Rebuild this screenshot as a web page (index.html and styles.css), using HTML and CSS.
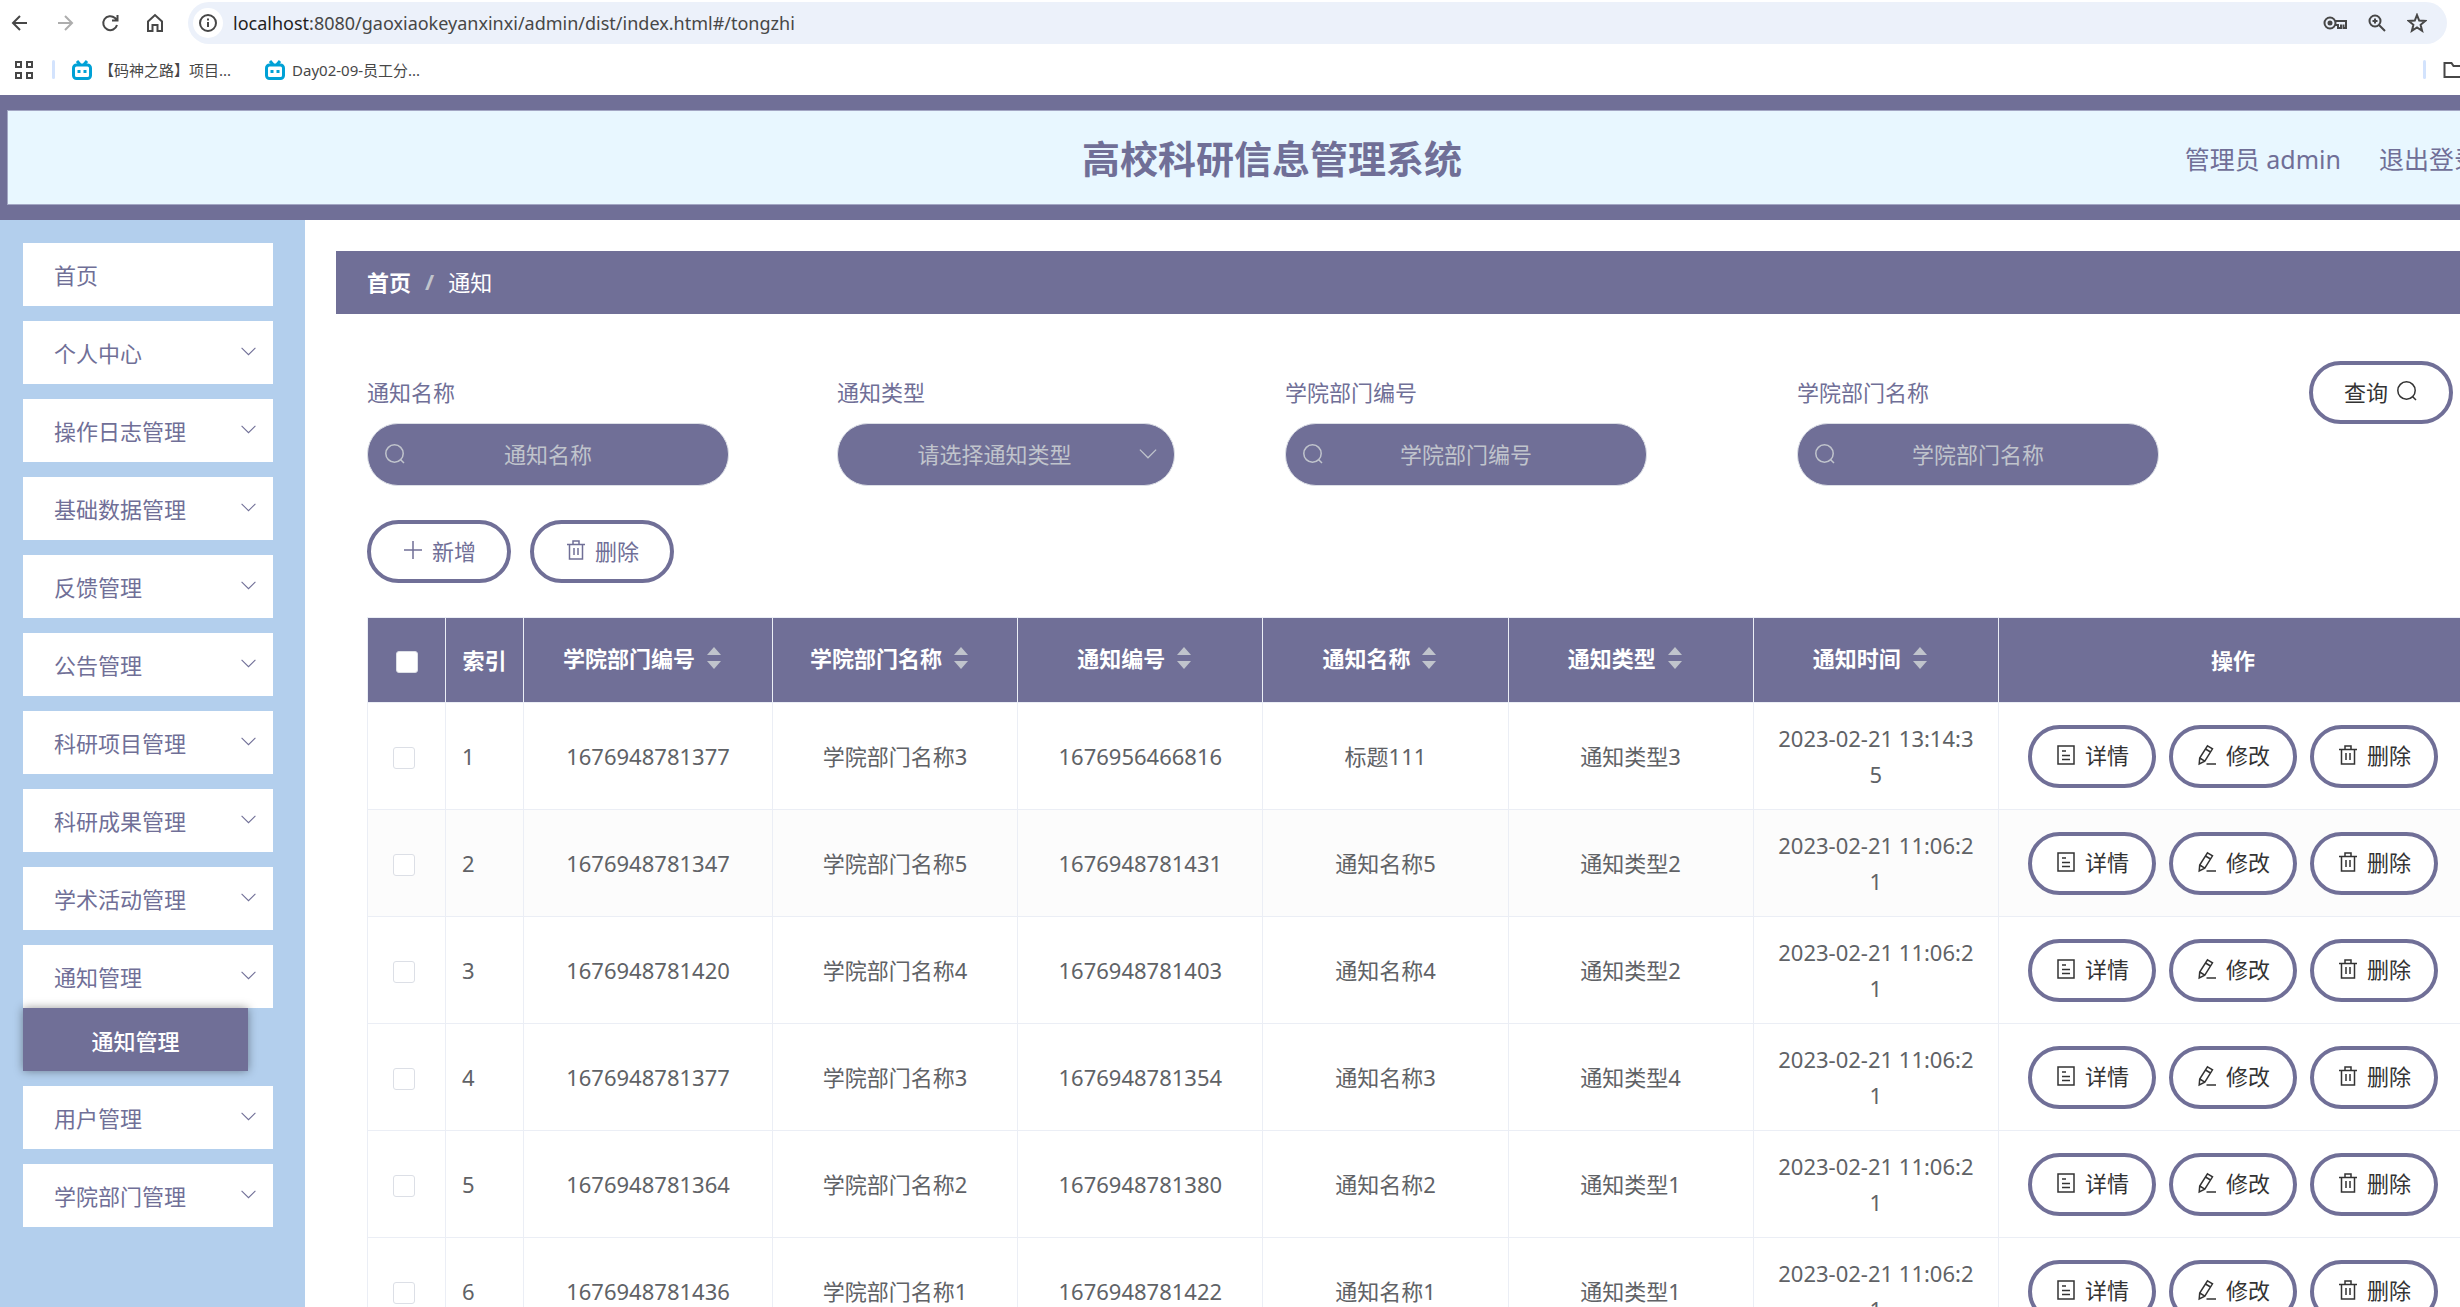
FILE: index.html
```
<!DOCTYPE html>
<html lang="zh-CN">
<head>
    <meta charset="UTF-8">
    <meta name="viewport" content="width=device-width, initial-scale=1.0">
    <title>高校科研信息管理系统</title>
    <link rel="stylesheet" href="styles.css">
</head>
<body>
    <!-- shared icons -->
    <svg class="sprite" aria-hidden="true">
        <symbol id="i-down" viewBox="0 0 16 16"><path d="M1.500 4.500 8 11l6.500-6.500"/></symbol>
        <symbol id="i-search" viewBox="0 0 22 22"><circle cx="10.500" cy="10.500" r="8.700"/><path d="m16.500 16.500 3.500 3.500"/></symbol>
        <symbol id="i-plus" viewBox="0 0 22 22"><path d="M11 2v18M2 11h18"/></symbol>
        <symbol id="i-trash" viewBox="0 0 22 22"><path d="M2 5.500h18M4.500 5.500V20h13V5.500M8 5V2h6v3M9 9v7M13 9v7"/></symbol>
        <symbol id="i-doc" viewBox="0 0 22 22"><path d="M3 2h16v18H3zM7 7h4M7 11.500h8M7 15.500h8"/></symbol>
        <symbol id="i-edit" viewBox="0 0 22 22"><path d="m11.500 1.800 5 3L8.800 17.200 3.200 20l.5-6zM9.500 5l5 3M3.700 14l5.100 3.200M10.500 20H20"/></symbol>
        <symbol id="i-sort" viewBox="0 0 14 22"><path d="M7 0l7 8H0zM7 22l7-8H0z"/></symbol>
        <symbol id="i-tv" viewBox="0 0 20 20"><path d="m5 1 3 3.500M15 1l-3 3.500"/><rect x="1.500" y="5" width="17" height="13.500" rx="3"/><path d="M7 10v3M13 10v3"/></symbol>
    </svg>

    <div class="toolbar">
        <button class="tool" aria-label="后退"><svg viewBox="0 0 20 20"><path d="M17 10H3M10 3l-7 7 7 7"/></svg></button>
        <button class="tool disabled" aria-label="前进"><svg viewBox="0 0 20 20"><path d="M3 10h14M10 3l7 7-7 7"/></svg></button>
        <button class="tool" aria-label="刷新"><svg viewBox="0 0 20 20"><path d="M17 12a7 7 0 1 1-2-7l2 2M17.500 2v5.500H12"/></svg></button>
        <button class="tool" aria-label="主页"><svg viewBox="0 0 20 20"><path d="M3 8.500 10 2l7 6.500V18h-4.500v-6h-5v6H3z"/></svg></button>
        <div class="address">
            <span class="info"><svg viewBox="0 0 20 20"><circle cx="10" cy="10" r="8"/><path d="M10 9v5M10 5.500v2"/></svg></span>
            <span class="url"><b>localhost</b>:8080/gaoxiaokeyanxinxi/admin/dist/index.html#/tongzhi</span>
            <svg class="key" viewBox="0 0 24 20"><circle cx="7" cy="10" r="5.500"/><circle class="dot" cx="7" cy="10" r="1.500"/><path d="M12 8h11v7h-2.500v-3.500M18 11.500V15h-3v-3h-3"/></svg>
            <svg viewBox="0 0 20 20"><circle cx="8" cy="8" r="5.500"/><path d="m12 12 6 6M8 5.500v5M5.500 8h5"/></svg>
            <svg viewBox="0 0 20 20"><path d="m10 2 2.200 5.600 6 .4-4.600 3.800 1.500 6-5.100-3.300-5.100 3.300 1.500-6L1.800 8l6-.4z"/></svg>
        </div>
    </div>

    <div class="bookmarks">
        <svg class="apps" viewBox="0 0 20 20"><path d="M2 2h5v5H2zM13 2h5v5h-5zM2 13h5v5H2zM13 13h5v5h-5z"/></svg>
        <i class="divider"></i>
        <a class="bookmark first" href="#"><svg class="tv"><use href="#i-tv"/></svg>【码神之路】项目...</a>
        <a class="bookmark" href="#"><svg class="tv"><use href="#i-tv"/></svg>Day02-09-员工分...</a>
        <i class="divider last"></i>
        <svg class="folder" viewBox="0 0 24 20"><path d="M1.500 17V3h7l2 3H23v11z"/></svg>
    </div>

    <div class="app">
        <header class="header">
            <div class="header-inner">
                <h1>高校科研信息管理系统</h1>
                <div class="user">
                    <span>管理员 admin</span>
                    <a href="#">退出登录</a>
                </div>
            </div>
        </header>

        <div class="body">
            <nav class="sidebar">
                <a class="menu-item" href="#">首页</a>
                <a class="menu-item" href="#">个人中心<svg><use href="#i-down"/></svg></a>
                <a class="menu-item" href="#">操作日志管理<svg><use href="#i-down"/></svg></a>
                <a class="menu-item" href="#">基础数据管理<svg><use href="#i-down"/></svg></a>
                <a class="menu-item" href="#">反馈管理<svg><use href="#i-down"/></svg></a>
                <a class="menu-item" href="#">公告管理<svg><use href="#i-down"/></svg></a>
                <a class="menu-item" href="#">科研项目管理<svg><use href="#i-down"/></svg></a>
                <a class="menu-item" href="#">科研成果管理<svg><use href="#i-down"/></svg></a>
                <a class="menu-item" href="#">学术活动管理<svg><use href="#i-down"/></svg></a>
                <div class="menu-group">
                    <a class="menu-item" href="#">通知管理<svg><use href="#i-down"/></svg></a>
                    <a class="submenu-item" href="#">通知管理</a>
                </div>
                <a class="menu-item" href="#">用户管理<svg><use href="#i-down"/></svg></a>
                <a class="menu-item" href="#">学院部门管理<svg><use href="#i-down"/></svg></a>
            </nav>

            <main class="main">
                <div class="breadcrumb">
                    <a href="#">首页</a>
                    <span class="slash">/</span>
                    <span>通知</span>
                </div>

                <div class="panel">
                    <form class="search">
                        <div class="field">
                            <label for="name">通知名称</label>
                            <div class="control">
                                <svg class="icon"><use href="#i-search"/></svg>
                                <input id="name" type="text" placeholder="通知名称">
                            </div>
                        </div>
                        <div class="field">
                            <label for="type">通知类型</label>
                            <div class="control narrow">
                                <select id="type">
                                    <option>请选择通知类型</option>
                                    <option>通知类型1</option>
                                    <option>通知类型2</option>
                                    <option>通知类型3</option>
                                    <option>通知类型4</option>
                                </select>
                                <svg class="arrow"><use href="#i-down"/></svg>
                            </div>
                        </div>
                        <div class="field">
                            <label for="dept-no">学院部门编号</label>
                            <div class="control">
                                <svg class="icon"><use href="#i-search"/></svg>
                                <input id="dept-no" type="text" placeholder="学院部门编号">
                            </div>
                        </div>
                        <div class="field">
                            <label for="dept-name">学院部门名称</label>
                            <div class="control">
                                <svg class="icon"><use href="#i-search"/></svg>
                                <input id="dept-name" type="text" placeholder="学院部门名称">
                            </div>
                        </div>
                        <div class="field">
                            <button class="btn wide" type="button">查询<svg class="icon"><use href="#i-search"/></svg></button>
                        </div>
                    </form>

                    <div class="actions">
                        <button class="btn wide tint"><svg class="icon"><use href="#i-plus"/></svg>新增</button>
                        <button class="btn wide tint"><svg class="icon"><use href="#i-trash"/></svg>删除</button>
                    </div>

                    <table class="table">
                        <colgroup>
                            <col class="col-small"><col class="col-small"><col class="col-dept">
                            <col><col><col><col><col>
                            <col class="col-ops">
                        </colgroup>
                        <thead>
                            <tr>
                                <th><input type="checkbox" aria-label="全选"></th>
                                <th>索引</th>
                                <th><span class="sort">学院部门编号<svg><use href="#i-sort"/></svg></span></th>
                                <th><span class="sort">学院部门名称<svg><use href="#i-sort"/></svg></span></th>
                                <th><span class="sort">通知编号<svg><use href="#i-sort"/></svg></span></th>
                                <th><span class="sort">通知名称<svg><use href="#i-sort"/></svg></span></th>
                                <th><span class="sort">通知类型<svg><use href="#i-sort"/></svg></span></th>
                                <th><span class="sort">通知时间<svg><use href="#i-sort"/></svg></span></th>
                                <th>操作</th>
                            </tr>
                        </thead>
                        <tbody id="rows"></tbody>
                    </table>
                </div>
            </main>
        </div>
    </div>

    <script src="script.js"></script>
</body>
</html>
```
FILE: script.js
```
const notices = [
    ['1676948781377', '学院部门名称3', '1676956466816', '标题111', '通知类型3', '2023-02-21 13:14:35'],
    ['1676948781347', '学院部门名称5', '1676948781431', '通知名称5', '通知类型2', '2023-02-21 11:06:21'],
    ['1676948781420', '学院部门名称4', '1676948781403', '通知名称4', '通知类型2', '2023-02-21 11:06:21'],
    ['1676948781377', '学院部门名称3', '1676948781354', '通知名称3', '通知类型4', '2023-02-21 11:06:21'],
    ['1676948781364', '学院部门名称2', '1676948781380', '通知名称2', '通知类型1', '2023-02-21 11:06:21'],
    ['1676948781436', '学院部门名称1', '1676948781422', '通知名称1', '通知类型1', '2023-02-21 11:06:21']
];

const activeRow = 1;

function actionButton(icon, text) {
    return `<button class="btn"><svg class="icon"><use href="#${icon}"/></svg>${text}</button>`;
}

function renderRows() {
    document.getElementById('rows').innerHTML = notices.map((notice, i) => `
        <tr${i === activeRow ? ' class="active"' : ''}>
            <td class="check"><input type="checkbox" aria-label="选择第${i + 1}行"></td>
            <td class="index">${i + 1}</td>
            ${notice.map(value => `<td>${value}</td>`).join('')}
            <td><div class="ops">
                ${actionButton('i-doc', '详情')}
                ${actionButton('i-edit', '修改')}
                ${actionButton('i-trash', '删除')}
            </div></td>
        </tr>`).join('');
}

renderRows();
```
FILE: styles.css
```
* {
    box-sizing: border-box;
}

body {
    margin: 0;
    height: 100vh;
    display: flex;
    flex-direction: column;
    overflow: hidden;
    font-family: "Noto Sans", "Noto Sans CJK SC", sans-serif;
    font-size: 22px;
    color: #606266;
    background-color: #fff;
}

a {
    color: inherit;
    text-decoration: none;
}

button, input, select {
    font: inherit;
}

svg {
    flex: none;
    fill: none;
    stroke: currentColor;
}

.sprite {
    display: none;
}

/* browser bar */
.toolbar {
    flex: none;
    height: 46px;
    display: flex;
    align-items: center;
    padding: 0 13px 0 10px;
    color: #474747;
}

.toolbar svg {
    width: 20px;
    height: 20px;
    stroke-width: 2;
}

.tool {
    display: flex;
    width: 20px;
    margin-right: 25px;
    padding: 0;
    border: 0;
    background: none;
    color: #474747;
}

.tool.disabled {
    color: #adadad;
}

.address {
    flex: 1;
    height: 42px;
    display: flex;
    align-items: center;
    gap: 20px;
    margin-left: -2px;
    padding: 0 20px 0 5px;
    border-radius: 21px;
    background-color: #ecf1fa;
}

.info {
    width: 30px;
    height: 30px;
    display: flex;
    align-items: center;
    justify-content: center;
    margin-right: -10px;
    border-radius: 15px;
    background-color: #fff;
}

.url {
    flex: 1;
    font-size: 18px;
}

.url b {
    font-weight: normal;
    color: #1f1f1f;
}

.toolbar .key {
    width: 24px;
}

.key .dot {
    fill: currentColor;
}

.bookmarks {
    flex: none;
    height: 49px;
    display: flex;
    align-items: center;
    padding-bottom: 2px;
    padding-left: 14px;
    font-size: 15px;
    color: #474747;
}

.bookmarks svg {
    width: 20px;
    height: 20px;
    stroke-width: 2;
}

.divider {
    width: 3px;
    height: 19px;
    margin: 0 17px 0 18px;
    border-radius: 2px;
    background-color: #d3e3fd;
}

.divider.last {
    margin-left: auto;
}

.bookmark {
    display: flex;
    align-items: center;
    gap: 7px;
    margin-right: 34px;
}

.bookmarks .tv {
    color: #00a1d6;
    stroke-width: 3;
}

.bookmarks .folder {
    width: 24px;
    margin-right: -7px;
}

/* the app is a little wider than the window */
.app {
    flex: 1;
    width: calc(100% + 84px);
    display: flex;
    flex-direction: column;
}

.header {
    padding: 15px 7px;
    background-color: #706f97;
}

.header-inner {
    height: 95px;
    display: grid;
    grid-template-columns: 1fr auto 1fr;
    align-items: center;
    padding: 0 57px;
    border: 1px solid #a3a7c4;
    background-color: #e8f7ff;
    color: #706f97;
}

.header h1 {
    grid-column: 2;
    margin: 0;
    font-size: 38px;
    line-height: 48px;
}

.user {
    display: flex;
    justify-content: flex-end;
    gap: 38px;
    font-size: 25px;
}

.body {
    flex: 1;
    display: flex;
    align-items: stretch;
}

.sidebar {
    flex: none;
    width: 305px;
    display: flex;
    flex-direction: column;
    gap: 15px;
    padding: 23px 32px 0 23px;
    background-color: #b3cfed;
    color: #706f97;
}

.menu-item {
    height: 63px;
    display: flex;
    align-items: center;
    justify-content: space-between;
    padding: 0 16px 2px 31px;
    background-color: #fff;
}

.menu-item svg {
    width: 17px;
    height: 17px;
}

.submenu-item {
    width: 225px;
    height: 63px;
    display: flex;
    align-items: center;
    justify-content: center;
    position: relative;
    background-color: #706f97;
    box-shadow: 0 0 9px rgba(0, 0, 0, 0.4);
    color: #fff;
    font-weight: 500;
}

.main {
    flex: 1;
    padding: 31px 45px 0 31px;
}

.breadcrumb {
    height: 63px;
    display: flex;
    align-items: center;
    gap: 14px;
    padding: 0 31px 3px;
    background-color: #706f97;
    color: #fff;
}

.breadcrumb a {
    font-weight: bold;
}

.slash {
    color: #c0c4cc;
    font-weight: bold;
}

.panel {
    padding: 47px 31px;
}

/* search form */
.search {
    display: grid;
    grid-template-columns: 470fr 448fr 512fr 512fr 159fr;
    margin-bottom: 34px;
}

.field label {
    display: block;
    line-height: 62px;
    color: #706f97;
}

.control {
    width: 362px;
    position: relative;
    color: #c0c4cc;
}

.control.narrow {
    width: 338px;
}

.control input,
.control select {
    display: block;
    width: 100%;
    height: 63px;
    padding: 0 47px 2px;
    border: 1px solid #dcdfe6;
    border-radius: 31px;
    background-color: #706f97;
    color: #c0c4cc;
    text-align: center;
    appearance: none;
}

.control select {
    padding: 0 47px 2px 24px;
    text-align-last: center;
}

.control input::placeholder {
    color: #c0c4cc;
}

.control .icon,
.control .arrow {
    position: absolute;
    left: 17px;
    top: 20px;
}

.control .arrow {
    left: auto;
    right: 17px;
    top: 21px;
    width: 20px;
    height: 20px;
}

.icon {
    width: 22px;
    height: 22px;
    stroke-width: 1.5;
}

.btn {
    width: 128px;
    height: 63px;
    display: flex;
    align-items: center;
    justify-content: center;
    gap: 8px;
    padding: 0 0 2px;
    border: 4px solid #706f97;
    border-radius: 32px;
    background-color: #fff;
    color: #333;
    cursor: pointer;
}

.btn.wide {
    width: 144px;
    padding-bottom: 4px;
}

.btn.tint {
    color: #706f97;
}

.actions {
    display: flex;
    gap: 19px;
    margin-bottom: 34px;
}

/* table */
.table {
    width: 100%;
    table-layout: fixed;
    border-collapse: collapse;
    line-height: 36px;
}

.col-small {
    width: 78px;
}

.col-dept {
    width: 249px;
}

.col-ops {
    width: 469px;
}

.table th,
.table td {
    padding: 17px 20px;
    border: 1px solid #ebeef5;
    text-align: center;
    word-break: break-all;
}

.table th {
    height: 85px;
    padding: 0 16px;
    background-color: #706f97;
    color: #fff;
    white-space: nowrap;
}

.table .active {
    background-color: #fcfcfc;
}

.table .check,
.table .index {
    padding-left: 16px;
    text-align: left;
}

.table .check {
    padding-left: 25px;
}

.table input {
    display: inline-block;
    width: 22px;
    height: 22px;
    margin: 0 0 3px;
    border: 1px solid #dcdfe6;
    border-radius: 3px;
    background-color: #fff;
    vertical-align: middle;
    appearance: none;
}

.sort {
    display: inline-flex;
    align-items: center;
    padding-bottom: 4px;
}

.sort svg {
    width: 14px;
    height: 22px;
    margin: 0 12px;
    fill: #c0c4cc;
    stroke: none;
}

.ops {
    display: flex;
    justify-content: center;
    gap: 13px;
}
```
